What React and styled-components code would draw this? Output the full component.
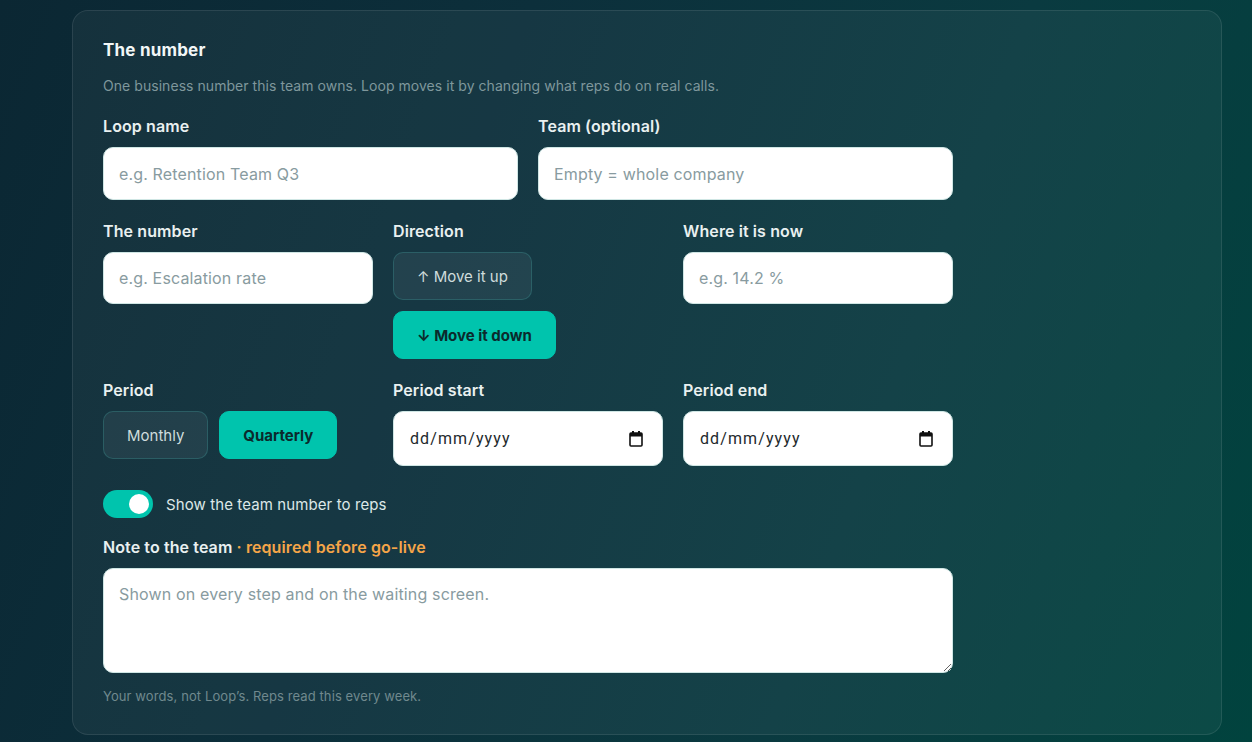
import React, { useState } from "react";
import styled, { createGlobalStyle } from "styled-components";

const Global = createGlobalStyle`
  * { box-sizing: border-box; }
  html, body { margin: 0; padding: 0; }
  body {
    min-height: 742px;
    font-family: "Inter", "Noto Sans", sans-serif;
    background: linear-gradient(110deg, #0b2733 0%, #0c2f3b 35%, #0a3a40 68%, #01433e 100%);
    color: #e6eeee;
  }
`;

const Page = styled.div`
  padding: 10px 30px 8px 72px;
`;

const Card = styled.section`
  border: 1px solid rgba(255, 255, 255, 0.09);
  border-radius: 16px;
  background: rgba(255, 255, 255, 0.045);
  padding: 26px 30px 29px 30px;
`;

const Form = styled.div`
  max-width: 850px;
  display: flex;
  flex-direction: column;
`;

const Title = styled.h2`
  margin: 0;
  font-size: 17px;
  font-weight: 700;
  line-height: 26px;
  color: #f2f7f7;
  letter-spacing: 0.2px;
`;

const Desc = styled.p`
  margin: 13px 0 20px;
  font-size: 14px;
  line-height: 20px;
  color: #7f979c;
  letter-spacing: 0.05px;
`;

const Grid = styled.div`
  display: grid;
  grid-template-columns: repeat(${(p) => p.$cols}, 1fr);
  column-gap: 20px;
  margin-bottom: 21px;
  align-items: start;
`;

const Field = styled.div`
  display: flex;
  flex-direction: column;
`;

const Label = styled.label`
  font-size: 16px;
  font-weight: 600;
  line-height: 20px;
  color: #e9f0f0;
  margin-bottom: 11px;
  letter-spacing: 0.1px;
`;

const Required = styled.span`
  color: #f5a548;
`;

const Input = styled.input`
  width: 100%;
  height: ${(p) => p.$h || 53}px;
  border: 1px solid #cfe6e4;
  border-radius: 10px;
  background: #ffffff;
  padding: 0 15px;
  font-family: inherit;
  font-size: 16px;
  color: #1b2a2e;
  outline: none;
  letter-spacing: 0.15px;
  &::placeholder { color: #889ba0; }
`;

const DateBox = styled.div`
  position: relative;
`;

const DateInput = styled(Input)`
  font-family: "Roboto", sans-serif;
  padding: 0 40px 0 16px;
  color: #1d2225;
  letter-spacing: 1.1px;
  &::placeholder { color: #23292c; }
`;

const CalIcon = styled.svg`
  position: absolute;
  right: 20px;
  top: 50%;
  transform: translateY(-50%);
  pointer-events: none;
`;

const Chips = styled.div`
  display: flex;
  flex-wrap: wrap;
  gap: 11px;
`;

const Chip = styled.button`
  height: 48px;
  padding: 0 ${(p) => p.$px || 23}px;
  border-radius: 10px;
  font-family: inherit;
  font-size: 15px;
  cursor: pointer;
  border: 1px solid ${(p) => (p.$active ? "#00c4ad" : "rgba(60, 150, 150, 0.35)")};
  background: ${(p) => (p.$active ? "#00c4ad" : "rgba(255, 255, 255, 0.06)")};
  color: ${(p) => (p.$active ? "#0b2a2c" : "#cfdcdc")};
  font-weight: ${(p) => (p.$active ? 700 : 400)};
`;

const ToggleRow = styled.div`
  display: flex;
  align-items: center;
  gap: 13px;
  margin: 3px 0 19px;
  font-size: 15px;
  color: #dde8e8;
  letter-spacing: 0.1px;
`;

const Switch = styled.button`
  position: relative;
  width: 50px;
  height: 28px;
  border-radius: 14px;
  border: none;
  padding: 0;
  background: ${(p) => (p.$on ? "#00c4ad" : "#3a5258")};
  cursor: pointer;
  &::after {
    content: "";
    position: absolute;
    top: 4px;
    left: ${(p) => (p.$on ? "26px" : "4px")};
    width: 20px;
    height: 20px;
    border-radius: 50%;
    background: #fff;
  }
`;

const TextArea = styled.textarea`
  width: 100%;
  height: 105px;
  border: 1px solid #cfe6e4;
  border-radius: 10px;
  background: #fff;
  padding: 14px 15px;
  font-family: inherit;
  font-size: 16px;
  line-height: 22px;
  color: #1b2a2e;
  outline: none;
  display: block;
  letter-spacing: 0.15px;
  &::placeholder { color: #889ba0; }
`;

const Hint = styled.p`
  margin: 14px 0 0;
  font-size: 13px;
  line-height: 18px;
  color: #70898e;
  letter-spacing: 0.1px;
`;

function Calendar() {
  return (
    <CalIcon width="14" height="16" viewBox="0 0 14 16" aria-hidden="true">
      <rect x="3" y="0" width="2" height="3" fill="#111" />
      <rect x="9" y="0" width="2" height="3" fill="#111" />
      <rect x="1" y="2" width="12" height="13" rx="1" fill="none" stroke="#111" strokeWidth="1.6" />
      <rect x="1" y="2" width="12" height="3.5" fill="#111" />
    </CalIcon>
  );
}

function DateField({ label }) {
  return (
    <Field>
      <Label>{label}</Label>
      <DateBox>
        <DateInput $h={55} type="text" placeholder="dd/mm/yyyy" />
        <Calendar />
      </DateBox>
    </Field>
  );
}

export default function App() {
  const [dir, setDir] = useState("down");
  const [period, setPeriod] = useState("quarterly");
  const [show, setShow] = useState(true);
  return (
    <>
      <Global />
      <Page>
        <Card>
          <Form>
            <Title>The number</Title>
            <Desc>One business number this team owns. Loop moves it by changing what reps do on real calls.</Desc>
            <Grid $cols={2}>
              <Field>
                <Label>Loop name</Label>
                <Input placeholder="e.g. Retention Team Q3" />
              </Field>
              <Field>
                <Label>Team (optional)</Label>
                <Input placeholder="Empty = whole company" />
              </Field>
            </Grid>
            <Grid $cols={3}>
              <Field>
                <Label>The number</Label>
                <Input $h={52} placeholder="e.g. Escalation rate" />
              </Field>
              <Field>
                <Label>Direction</Label>
                <Chips>
                  <Chip $active={dir === "up"} onClick={() => setDir("up")}>↑ Move it up</Chip>
                  <Chip $active={dir === "down"} onClick={() => setDir("down")}>↓ Move it down</Chip>
                </Chips>
              </Field>
              <Field>
                <Label>Where it is now</Label>
                <Input $h={52} placeholder="e.g. 14.2 %" />
              </Field>
            </Grid>
            <Grid $cols={3}>
              <Field>
                <Label>Period</Label>
                <Chips>
                  <Chip $active={period === "monthly"} onClick={() => setPeriod("monthly")}>Monthly</Chip>
                  <Chip $active={period === "quarterly"} onClick={() => setPeriod("quarterly")}>Quarterly</Chip>
                </Chips>
              </Field>
              <DateField label="Period start" />
              <DateField label="Period end" />
            </Grid>
            <ToggleRow>
              <Switch $on={show} onClick={() => setShow(!show)} aria-label="toggle" />
              <span>Show the team number to reps</span>
            </ToggleRow>
            <Field>
              <Label>
                Note to the team <Required>· required before go-live</Required>
              </Label>
              <TextArea placeholder="Shown on every step and on the waiting screen." />
            </Field>
            <Hint>Your words, not Loop’s. Reps read this every week.</Hint>
          </Form>
        </Card>
      </Page>
    </>
  );
}
